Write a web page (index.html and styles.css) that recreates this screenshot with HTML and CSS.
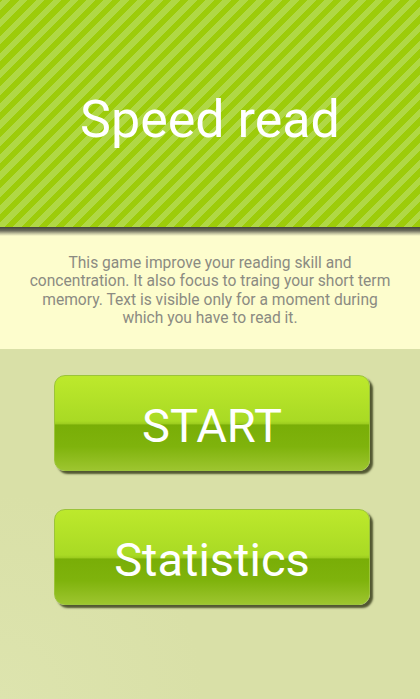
FILE: index.html
```html
<!DOCTYPE html>
<html lang="en">

<head>
    <meta charset="UTF-8">
    <meta name="viewport" content="width=device-width, initial-scale=1.0">
    <title>Speed read</title>
    <link rel="stylesheet" href="styles.css">
</head>

<body>

    <header class="title-bar">
        <h1 class="title">Speed read</h1>
    </header>
    <div class="title-shadow"></div>

    <section class="intro">
        <p class="intro-text">This game improve your reading skill and concentration. It also focus to traing your short term memory. Text is visible only for a moment during which you have to read it.</p>
    </section>

    <main class="menu">
        <button class="menu-btn">START</button>
        <button class="menu-btn">Statistics</button>
    </main>

</body>

</html>
```

FILE: styles.css
```css
* {
    margin: 0;
    padding: 0;
    box-sizing: border-box;
}

html,
body {
    height: 100%;
}

body {
    display: flex;
    flex-direction: column;
    font-family: Roboto, "Liberation Sans", sans-serif;
    background: radial-gradient(circle at 0 100%, #dde4ae 0, #d9e0a7 25%, #d9e0a7 100%);
}

/* striped title bar */
.title-bar {
    height: 227px;
    display: flex;
    align-items: center;
    justify-content: center;
    background: repeating-linear-gradient(-45deg,
            #9dcc0a 0,
            #9dcc0a 6px,
            #b0d845 6px,
            #b0d845 12px);
}

.title {
    font-weight: 400;
    font-size: 52px;
    color: #fff;
    padding-top: 12px;
}

.title-shadow {
    height: 9px;
    background: linear-gradient(to bottom, #45463a 0, #6b6c5c 40%, #c8c8a4 75%, #fdfdcd 100%);
}

.intro {
    background: #fdfdcd;
    height: 113px;
    display: flex;
    align-items: center;
    justify-content: center;
    padding: 0 26px 4px;
}

.intro-text {
    font-size: 15.6px;
    line-height: 18.5px;
    color: #8b8b82;
    text-align: center;
}

.menu {
    display: flex;
    flex-direction: column;
    align-items: center;
    gap: 38px;
    padding-top: 26px;
}

.menu-btn {
    width: 316px;
    height: 96px;
    padding-top: 5px;
    border: 1px solid #9bc43a;
    border-radius: 11px;
    font-family: Roboto, "Liberation Sans", sans-serif;
    font-size: 47px;
    color: #fff;
    background: linear-gradient(to bottom,
            #bde92c 0,
            #a9da24 48%,
            #9ccc1e 51%,
            #79ae07 52%,
            #7fb30c 75%,
            #9dc52f 100%);
    box-shadow: 3px 3px 2px rgba(58, 62, 28, 0.85);
    margin-left: 4px;
}
```
